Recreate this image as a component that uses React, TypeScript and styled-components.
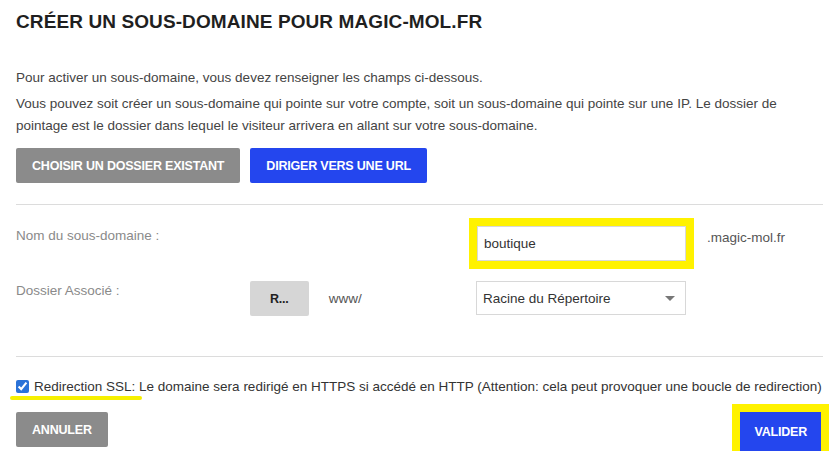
import styled, { createGlobalStyle } from 'styled-components';

const GlobalStyle = createGlobalStyle`
  * { box-sizing: border-box; }
  body {
    margin: 0;
    background: #fff;
    font-family: 'Liberation Sans', Arial, sans-serif;
    color: #3a3a3a;
  }
`;

const Page = styled.div`
  width: 839px;
  padding: 11px 16px 0 16px;
`;

const Title = styled.h1`
  margin: 0 0 34px;
  font-size: 19px;
  font-weight: 700;
  color: #1f1f1f;
  letter-spacing: 0.1px;
`;

const Text = styled.p`
  margin: 0 0 4px;
  font-size: 13.5px;
  line-height: 22px;
  color: #444;
  width: 807px;
`;

const ButtonRow = styled.div`
  display: flex;
  gap: 10px;
  margin-top: 11px;
`;

const Button = styled.button<{ $variant: 'grey' | 'blue' | 'light' }>`
  border: none;
  border-radius: 2px;
  height: 35px;
  padding: 0 ${(p) => (p.$variant === 'light' ? '20px' : '16px')};
  font-family: 'Liberation Sans', Arial, sans-serif;
  font-size: 12.5px;
  font-weight: 700;
  letter-spacing: -0.2px;
  text-transform: uppercase;
  cursor: pointer;
  color: ${(p) => (p.$variant === 'light' ? '#222' : '#fff')};
  background: ${(p) =>
    p.$variant === 'blue' ? '#2446ee' : p.$variant === 'grey' ? '#8b8b8b' : '#d6d6d6'};
`;

const Spacer = styled.div`
  height: 21px;
`;

const Divider = styled.hr`
  border: none;
  border-top: 1px solid #dcdcdc;
  margin: 0;
  width: 807px;
`;

const FormGrid = styled.div`
  display: grid;
  grid-template-columns: 234px 226px 210px auto;
  row-gap: 20px;
  padding: 21px 0 40px;
`;

const Label = styled.label`
  font-size: 13.5px;
  color: #8a8a8a;
  padding-top: 2px;
`;

const Cell = styled.div`
  display: flex;
  align-items: center;
  gap: 20px;
`;

const Input = styled.input`
  width: 209px;
  height: 35px;
  margin-left: 1px;
  border: 1px solid #d8d8d8;
  padding: 0 6px;
  font-family: 'Liberation Sans', Arial, sans-serif;
  font-size: 13.5px;
  color: #333;
  outline: 8px solid #fff200;
`;

const Suffix = styled.span`
  font-size: 13.5px;
  color: #555;
  padding: 4px 0 0 21px;
`;

const Muted = styled.span`
  font-size: 13.5px;
  color: #555;
`;

const SelectWrap = styled.div`
  position: relative;
  width: 210px;
  &::after {
    content: '';
    position: absolute;
    right: 11px;
    top: 15px;
    border-left: 5px solid transparent;
    border-right: 5px solid transparent;
    border-top: 5px solid #777;
  }
`;

const Select = styled.select`
  appearance: none;
  width: 100%;
  height: 34px;
  border: 1px solid #d8d8d8;
  background: #fff;
  padding: 0 6px;
  font-family: 'Liberation Sans', Arial, sans-serif;
  font-size: 13.5px;
  color: #333;
`;

const CheckRow = styled.label`
  display: flex;
  align-items: center;
  gap: 5px;
  margin-top: 22px;
  font-size: 13.5px;
  color: #333;
`;

const Check = styled.input`
  margin: 0;
  width: 13px;
  height: 13px;
  accent-color: #2a72d8;
`;

const Highlight = styled.span`
  position: relative;
  &::after {
    content: '';
    position: absolute;
    left: -24px;
    width: 132px;
    bottom: -6px;
    height: 4px;
    border-radius: 2px;
    background: #f6f000;
  }
`;

const Footer = styled.div`
  display: flex;
  justify-content: space-between;
  align-items: flex-start;
  width: 805px;
  margin-top: 18px;
`;

const Validate = styled(Button)`
  height: 39px;
  padding: 0 14px;
  margin-top: 0;
  border-radius: 0;
  outline: 8px solid #fff200;
`;

export default function App() {
  return (
    <Page>
      <GlobalStyle />
      <Title>CRÉER UN SOUS-DOMAINE POUR MAGIC-MOL.FR</Title>
      <Text>Pour activer un sous-domaine, vous devez renseigner les champs ci-dessous.</Text>
      <Text>
        Vous pouvez soit créer un sous-domaine qui pointe sur votre compte, soit un sous-domaine qui
        pointe sur une IP. Le dossier de pointage est le dossier dans lequel le visiteur arrivera en
        allant sur votre sous-domaine.
      </Text>
      <ButtonRow>
        <Button $variant="grey">Choisir un dossier existant</Button>
        <Button $variant="blue">Diriger vers une URL</Button>
      </ButtonRow>
      <Spacer />
      <Divider />
      <FormGrid>
        <Label>Nom du sous-domaine :</Label>
        <div />
        <Input defaultValue="boutique" />
        <Suffix>.magic-mol.fr</Suffix>

        <Label>Dossier Associé :</Label>
        <Cell>
          <Button $variant="light">R...</Button>
          <Muted>www/</Muted>
        </Cell>
        <SelectWrap>
          <Select defaultValue="root">
            <option value="root">Racine du Répertoire</option>
          </Select>
        </SelectWrap>
        <div />
      </FormGrid>
      <Divider />
      <CheckRow>
        <Check type="checkbox" defaultChecked />
        <span>
          <Highlight>Redirection SSL:</Highlight> Le domaine sera redirigé en HTTPS si accédé en HTTP
          (Attention: cela peut provoquer une boucle de redirection)
        </span>
      </CheckRow>
      <Footer>
        <Button $variant="grey">Annuler</Button>
        <Validate $variant="blue">Valider</Validate>
      </Footer>
    </Page>
  );
}
